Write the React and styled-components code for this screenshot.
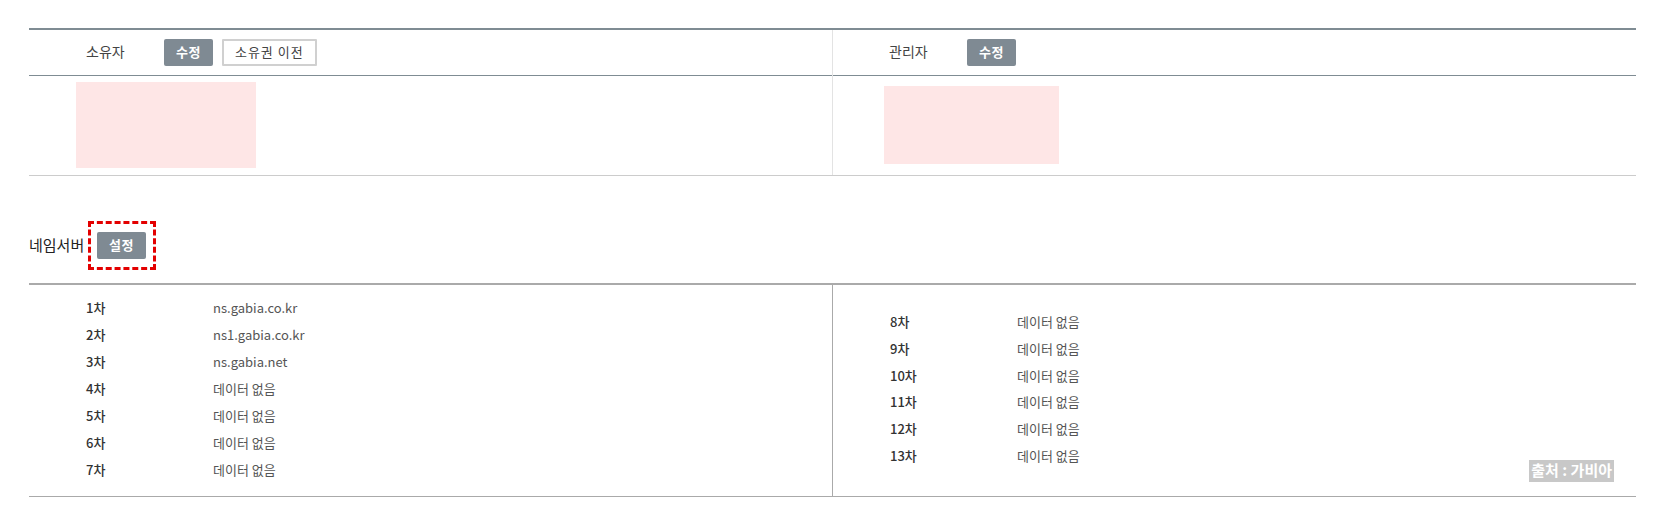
import React from "react";
import styled, { createGlobalStyle } from "styled-components";

const GlobalStyle = createGlobalStyle`
  body {
    margin: 0;
    background: #fff;
    font-family: "Noto Sans CJK KR", "Noto Sans", sans-serif;
  }
`;

const Page = styled.div`
  padding: 28px 18px 0 29px;
`;

const InfoTable = styled.div`
  display: grid;
  grid-template-columns: 803px 1fr;
  border-top: 2px solid #7f8c93;
  border-bottom: 1px solid #cccccc;
`;

const InfoColumn = styled.div`
  display: flex;
  flex-direction: column;
  border-left: ${(p) => (p.$divider ? "1px solid #e3e3e3" : "none")};
`;

const HeadCell = styled.div`
  display: flex;
  align-items: center;
  height: 45px;
  padding-left: ${(p) => p.$pad}px;
  border-bottom: 1px solid #7f8c93;
`;

const HeadLabel = styled.span`
  width: 78px;
  padding-bottom: 3px;
  font-size: 14px;
  color: #444;
`;

const SolidButton = styled.button`
  height: 27px;
  padding: 0 12px 2px;
  border: 0;
  border-radius: 2px;
  background: #7f8a93;
  color: #fff;
  font-family: inherit;
  font-size: 13px;
  font-weight: 700;
  letter-spacing: 0.5px;
  cursor: pointer;
`;

const OutlineButton = styled.button`
  height: 27px;
  margin-left: 9px;
  padding: 0 11px 2px;
  border: 2px solid #d0d0d0;
  border-radius: 1px;
  background: #fff;
  color: #444;
  font-family: inherit;
  font-size: 13px;
  letter-spacing: 1px;
  cursor: pointer;
`;

const BodyCell = styled.div`
  height: 99px;
  padding: ${(p) => p.$pad};
  box-sizing: border-box;
`;

const Redacted = styled.div`
  width: ${(p) => p.$w}px;
  height: ${(p) => p.$h}px;
  background: #fee6e6;
`;

const SectionHead = styled.div`
  display: flex;
  align-items: center;
  margin-top: 45px;
  margin-bottom: 13px;
`;

const SectionTitle = styled.h3`
  margin: 0;
  width: 59px;
  padding-bottom: 3px;
  font-size: 15px;
  font-weight: 400;
  color: #222;
`;

const Highlight = styled.span`
  display: inline-flex;
  padding: 8px 7px 8px 6px;
  border: 3px dashed #e30000;
`;

const NsTable = styled.div`
  display: grid;
  grid-template-columns: 803px 1fr;
  height: 211px;
  border-top: 2px solid #aaaaaa;
  border-bottom: 1px solid #aaaaaa;
`;

const NsColumn = styled.div`
  position: relative;
  display: flex;
  flex-direction: column;
  justify-content: center;
  padding: 0 0 4px 57px;
  border-left: ${(p) => (p.$divider ? "1px solid #aaaaaa" : "none")};
`;

const NsRow = styled.div`
  display: flex;
  align-items: center;
  height: 26.9px;
  font-size: 13px;
`;

const NsLabel = styled.span`
  width: 127px;
  font-weight: 500;
  color: #333;
`;

const NsValue = styled.span`
  color: #555;
`;

const SourceBadge = styled.span`
  position: absolute;
  right: 22px;
  bottom: 14px;
  height: 22px;
  padding: 0 2px;
  line-height: 20px;
  background: #c8c8c8;
  color: #fff;
  font-size: 15px;
  font-weight: 700;
`;

const left = [
  ["1차", "ns.gabia.co.kr"],
  ["2차", "ns1.gabia.co.kr"],
  ["3차", "ns.gabia.net"],
  ["4차", "데이터 없음"],
  ["5차", "데이터 없음"],
  ["6차", "데이터 없음"],
  ["7차", "데이터 없음"],
];

const right = [8, 9, 10, 11, 12, 13].map((n) => [`${n}차`, "데이터 없음"]);

export default function App() {
  return (
    <Page>
      <GlobalStyle />
      <InfoTable>
        <InfoColumn>
          <HeadCell $pad={57}>
            <HeadLabel>소유자</HeadLabel>
            <SolidButton>수정</SolidButton>
            <OutlineButton>소유권 이전</OutlineButton>
          </HeadCell>
          <BodyCell $pad="6px 0 0 47px">
            <Redacted $w={180} $h={86} />
          </BodyCell>
        </InfoColumn>
        <InfoColumn $divider>
          <HeadCell $pad={56}>
            <HeadLabel>관리자</HeadLabel>
            <SolidButton>수정</SolidButton>
          </HeadCell>
          <BodyCell $pad="10px 0 0 51px">
            <Redacted $w={175} $h={78} />
          </BodyCell>
        </InfoColumn>
      </InfoTable>

      <SectionHead>
        <SectionTitle>네임서버</SectionTitle>
        <Highlight>
          <SolidButton>설정</SolidButton>
        </Highlight>
      </SectionHead>

      <NsTable>
        <NsColumn>
          {left.map(([k, v]) => (
            <NsRow key={k}>
              <NsLabel>{k}</NsLabel>
              <NsValue>{v}</NsValue>
            </NsRow>
          ))}
        </NsColumn>
        <NsColumn $divider>
          {right.map(([k, v]) => (
            <NsRow key={k}>
              <NsLabel>{k}</NsLabel>
              <NsValue>{v}</NsValue>
            </NsRow>
          ))}
          <SourceBadge>출처 : 가비아</SourceBadge>
        </NsColumn>
      </NsTable>
    </Page>
  );
}
